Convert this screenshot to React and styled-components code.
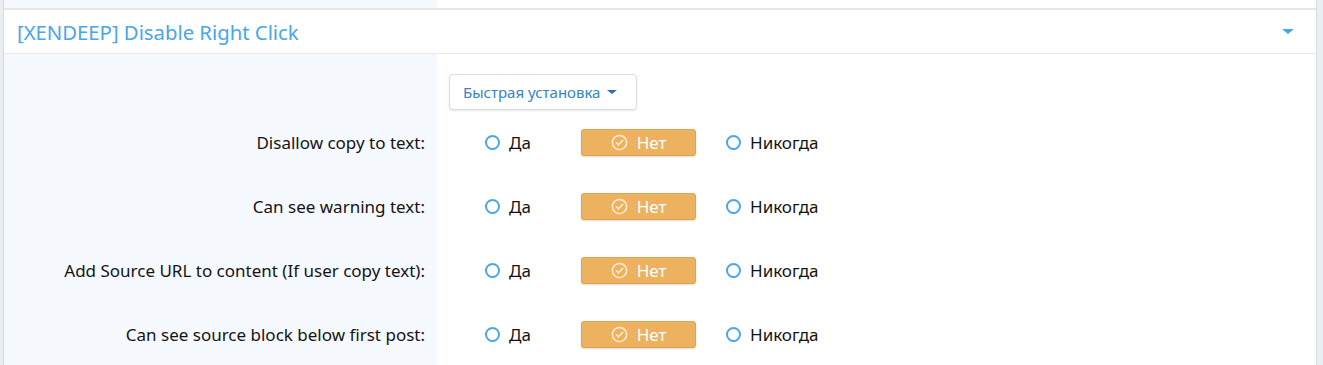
import React from "react";
import styled, { createGlobalStyle } from "styled-components";

const GlobalStyle = createGlobalStyle`
  *, *::before, *::after {
    box-sizing: border-box;
  }
  html, body {
    margin: 0;
    padding: 0;
    background: #fff;
  }
  body {
    font-family: "Noto Sans", "Open Sans", sans-serif;
    color: #141414;
  }
`;

const Page = styled.div`
  display: flex;
  width: 1323px;
  height: 365px;
  overflow: hidden;
`;

const Gutter = styled.div`
  flex: 0 0 ${(p) => p.$width}px;
  background: #e9eef2;
  border-${(p) => p.$side}: 1px solid #d6dbe0;
`;

const Main = styled.div`
  flex: 1;
  display: flex;
  flex-direction: column;
  min-width: 0;
`;

const PrevBlock = styled.div`
  flex-shrink: 0;
  display: grid;
  grid-template-columns: 433px 1fr;
  height: 10px;
  border-bottom: 2px solid #e3e6ea;
`;

const LabelBg = styled.div`
  background: #f5f9fe;
`;

const Header = styled.div`
  flex-shrink: 0;
  display: flex;
  align-items: center;
  justify-content: space-between;
  height: 44px;
  padding: 0 22px 0 13px;
  border-bottom: 1px solid #e6e9ec;
  background: #fff;
`;

const Title = styled.h2`
  margin: 0;
  font-size: 20.3px;
  font-weight: 400;
  color: #47a7eb;
`;

const Caret = styled.span`
  display: inline-block;
  flex-shrink: 0;
  width: 0;
  height: 0;
  border-left: ${(p) => p.$size}px solid transparent;
  border-right: ${(p) => p.$size}px solid transparent;
  border-top: ${(p) => p.$size - 1}px solid ${(p) => p.$color};
`;

const Body = styled.div`
  flex: 1 0 auto;
  display: grid;
  grid-template-columns: 433px 1fr;
  grid-auto-rows: min-content;
  background: linear-gradient(to right, #f5f9fe 433px, #fff 433px);
`;

const LabelCell = styled.div`
  display: flex;
  align-items: center;
  justify-content: flex-end;
  height: ${(p) => p.$height}px;
  padding-right: 12px;
  padding-top: ${(p) => p.$top || 0}px;
  font-size: 17px;
  color: #141414;
`;

const ValueCell = styled.div`
  display: flex;
  align-items: center;
  height: ${(p) => p.$height}px;
  padding-left: 12px;
  padding-top: ${(p) => p.$top || 0}px;
`;

const QuickButton = styled.button`
  display: inline-flex;
  align-items: center;
  gap: 7px;
  height: 36px;
  padding: 0 19px 0 13px;
  border: 1px solid #d9dee3;
  border-radius: 4px;
  background: #fff;
  box-shadow: 0 1px 2px rgba(0, 0, 0, 0.1);
  font-family: inherit;
  font-size: 15px;
  color: #3484c7;
  cursor: pointer;
`;

const Options = styled.div`
  display: grid;
  grid-template-columns: 97px 144px auto;
  align-items: center;
  padding-left: 35px;
`;

const Option = styled.label`
  display: inline-flex;
  align-items: center;
  justify-content: ${(p) => (p.$selected ? "center" : "flex-start")};
  gap: ${(p) => (p.$selected ? 9 : 9)}px;
  width: ${(p) => (p.$selected ? "115px" : "auto")};
  height: 27px;
  border-radius: 3px;
  font-size: 17px;
  color: ${(p) => (p.$selected ? "#fff" : "#141414")};
  background: ${(p) => (p.$selected ? "#edb25f" : "transparent")};
  border: 1px solid ${(p) => (p.$selected ? "#e3a24c" : "transparent")};
  box-shadow: ${(p) => (p.$selected ? "0 1px 2px rgba(0,0,0,0.15)" : "none")};
  cursor: pointer;
`;

const Radio = styled.span`
  display: block;
  flex: 0 0 15px;
  width: 15px;
  height: 15px;
  border: 2px solid #48a5ea;
  border-radius: 50%;
  background: #fff;
`;

const CheckCircle = () => (
  <svg width="17" height="17" viewBox="0 0 16 16" fill="none">
    <circle cx="8" cy="8" r="6.7" stroke="#fdebd2" strokeWidth="1.4" />
    <path d="M5 8.2l2 2 4-4.2" stroke="#fdebd2" strokeWidth="1.4" strokeLinecap="round" strokeLinejoin="round" />
  </svg>
);

const rows = [
  "Disallow copy to text:",
  "Can see warning text:",
  "Add Source URL to content (If user copy text):",
  "Can see source block below first post:",
];

const choices = [
  { label: "Да" },
  { label: "Нет", selected: true },
  { label: "Никогда" },
];

export default function App() {
  return (
    <>
      <GlobalStyle />
      <Page>
        <Gutter $width={4} $side="right" />
        <Main>
          <PrevBlock>
            <LabelBg />
            <div />
          </PrevBlock>
          <Header>
            <Title>[XENDEEP] Disable Right Click</Title>
            <Caret $size={6} $color="#47a7eb" />
          </Header>
          <Body>
            <LabelCell $height={56} $top={20} />
            <ValueCell $height={56} $top={20}>
              <QuickButton>
                Быстрая установка
                <Caret $size={5} $color="#2a6fb0" />
              </QuickButton>
            </ValueCell>
            {rows.map((row) => (
              <React.Fragment key={row}>
                <LabelCell $height={64}>{row}</LabelCell>
                <ValueCell $height={64}>
                  <Options>
                    {choices.map((c) => (
                      <div key={c.label}>
                        <Option $selected={c.selected}>
                          {c.selected ? <CheckCircle /> : <Radio />}
                          {c.label}
                        </Option>
                      </div>
                    ))}
                  </Options>
                </ValueCell>
              </React.Fragment>
            ))}
          </Body>
        </Main>
        <Gutter $width={7} $side="left" />
      </Page>
    </>
  );
}
